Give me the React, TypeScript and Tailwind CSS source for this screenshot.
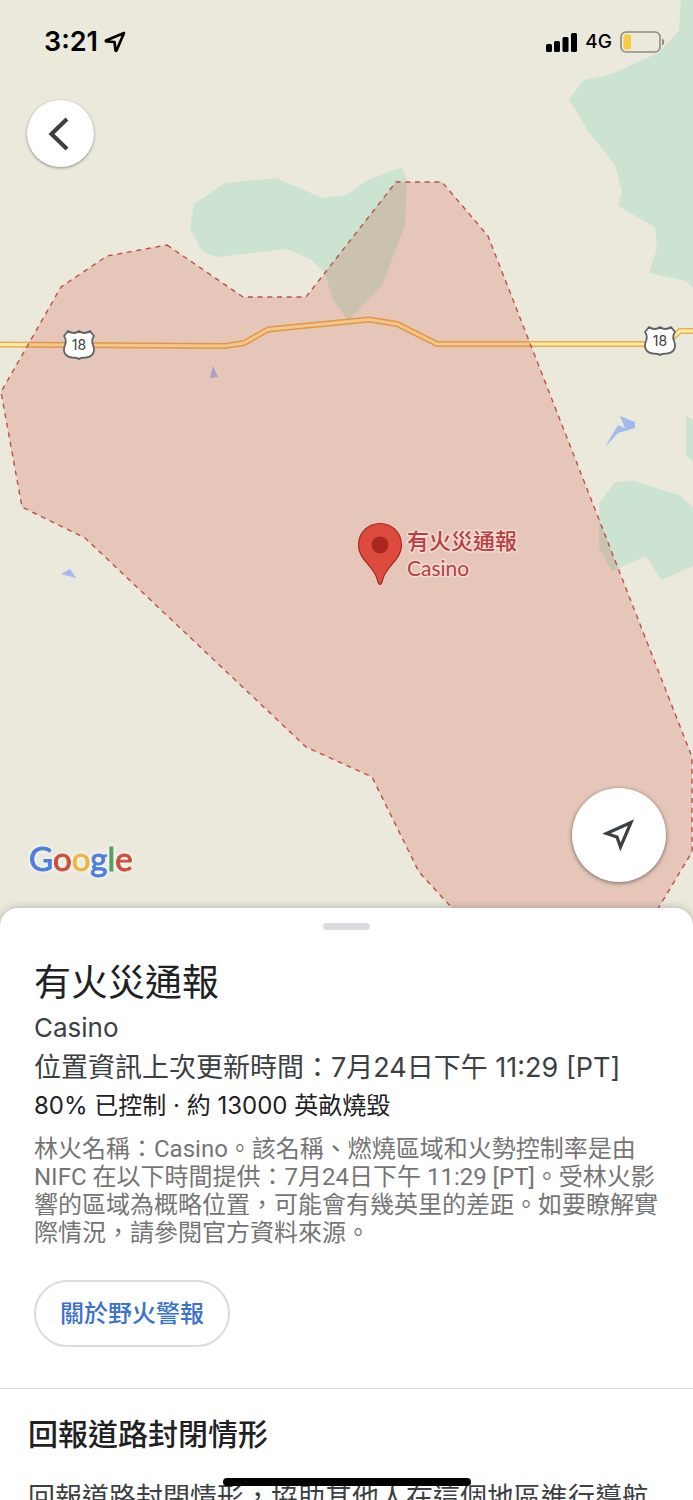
import React from "react";

const parks = [
  "225,183 276,178 322,198 346,195 366,181 402,167 407,180 405,225 382,286 348,321 332,298 325,273 312,260 287,249 216,257 202,251 190,228 194,204",
  "681,0 679,31 658,53 612,74 584,80 569,99 588,131 615,165 622,192 618,206 655,227 657,249 649,273 686,281 693,288 693,0",
  "599,503 615,482 634,481 679,495 693,507 693,566 661,580 646,556 612,571 599,548",
  "686,416 693,420 693,462 686,455",
];

const lakes = [
  "620,416 635,422 635,428 618,433 605,447 618,425 625,428",
  "213,366 218,377 210,378",
  "61,574 70,569 76,578",
];

const fireArea =
  "167,245 243,297 306,297 396,182 442,182 488,236 692,757 692,852 659,907 640,938 480,938 452,908 419,872 372,777 306,747 85,538 22,507 1,392 61,287 107,256";

const road =
  "M0 344.5L225 346L244 343L268 329.5L369 319.5L397 324L437 344H665L680 331H693";

const RouteShield = ({ x, y }: { x: number; y: number }) => (
  <g transform={`translate(${x} ${y})`}>
    <path
      d="M-11 -14Q-5 -10 0 -14Q5 -10 11 -14L15 -9Q12 -5 14 0C17 7 13 12 7 12.500Q2 12.500 0 14Q-2 12.500 -7 12.500C-13 12 -17 7 -14 0Q-12 -5 -15 -9Z"
      fill="#fff"
      stroke="#5f6163"
      strokeWidth="1.8"
      strokeLinejoin="round"
    />
    <text
      y="5"
      textAnchor="middle"
      className="font-['Inter','Liberation_Sans',sans-serif] text-[14px]"
      fill="#3c4043"
    >
      18
    </text>
  </g>
);

const FireMap = () => (
  <svg
    className="block h-full w-full"
    viewBox="0 0 693 930"
    preserveAspectRatio="xMidYMin slice"
    role="img"
    aria-label="Casino"
  >
    {parks.map((points) => (
      <polygon key={points} points={points} fill="#cbe3d0" />
    ))}
    {lakes.map((points) => (
      <polygon key={points} points={points} fill="#a3b9ef" />
    ))}
    <path d={road} fill="none" stroke="#e6b052" strokeWidth="6" />
    <path d={road} fill="none" stroke="#fee9a6" strokeWidth="3" />
    <polygon points={fireArea} fill="#c8200e" fillOpacity="0.17" />
    <polygon
      points={fireArea}
      fill="none"
      stroke="#bf4f48"
      strokeWidth="1.4"
      strokeDasharray="5 4.700"
    />
    <RouteShield x={79} y={345} />
    <RouteShield x={660} y={341} />
    <path
      d="M380 584.500C378 584.500 378 581 376.500 577C372 565 358.500 559 358.500 545C358.500 533 368 523.500 380 523.500S401.500 533 401.500 545C401.500 559 388 565 383.500 577C382 581 382 584.500 380 584.500Z"
      fill="#dc4b3e"
      stroke="#a52a23"
      strokeWidth="1.2"
    />
    <circle cx="380" cy="545" r="8.500" fill="#a82820" />
    <g
      fill="#b83f40"
      stroke="#f3ddd5"
      strokeWidth="3"
      strokeLinejoin="round"
      paintOrder="stroke"
    >
      <text
        x="407"
        y="549"
        className="font-['Noto_Sans_CJK_TC',sans-serif] text-[22px] font-medium"
      >
        有火災通報
      </text>
      <text
        x="407"
        y="576"
        className="font-['Lato','Liberation_Sans',sans-serif] text-[21px]"
      >
        Casino
      </text>
    </g>
  </svg>
);

const StatusBar = () => (
  <div className="flex h-10 items-center justify-between pl-11 pr-7 text-black">
    <div className="flex items-center gap-1.5">
      <span className="text-[27px] font-semibold">3:21</span>
      <svg width="22" height="22" viewBox="0 0 22 22" fill="none">
        <path
          d="M20 2L2 9.500Q1.500 10.500 2.500 10.500L10.500 11L11.500 19.500Q12 20.500 12.500 19.500Z"
          stroke="currentColor"
          strokeWidth="2.700"
          strokeLinejoin="round"
        />
      </svg>
    </div>
    <div className="flex items-center gap-2">
      <svg width="32" height="20" viewBox="0 0 32 20" fill="currentColor">
        <rect x="1" y="12" width="6" height="8" rx="1.500" />
        <rect x="9" y="9" width="6" height="11" rx="1.500" />
        <rect x="17.500" y="5" width="6" height="15" rx="1.500" />
        <rect x="26" y="1" width="6" height="19" rx="1.500" />
      </svg>
      <span className="text-[19px] font-medium">4G</span>
      <svg width="45" height="22" viewBox="0 0 45 22" fill="none">
        <rect
          x="1"
          y="1"
          width="39"
          height="20"
          rx="5"
          stroke="#8e8c80"
          strokeWidth="1.600"
        />
        <rect x="3.500" y="3.500" width="7.500" height="15" rx="2" fill="#f7cb45" />
        <path d="M42 7.500C45 8.500 45 13.500 42 14.500Z" fill="#8e8c80" />
      </svg>
    </div>
  </div>
);

const GoogleLogo = () => (
  <span className="mb-1 font-['Lato','Liberation_Sans',sans-serif] text-[33px] leading-10 drop-shadow-[0_0_2px_#ffffff] [-webkit-text-stroke:1px]">
    <span className="text-[#4f7fdc]">G</span>
    <span className="text-[#c9503f]">o</span>
    <span className="text-[#e8b94a]">o</span>
    <span className="text-[#4f7fdc]">g</span>
    <span className="text-[#55a05c]">l</span>
    <span className="text-[#c9503f]">e</span>
  </span>
);

const App = () => {
  return (
    <main className="relative flex h-screen flex-col overflow-hidden bg-white font-['Inter','Noto_Sans_CJK_TC',sans-serif]">
      <section className="relative h-[62vh] shrink-0 bg-[#ebe9dc]">
        <FireMap />
        <div className="absolute inset-0 flex flex-col justify-between pt-[22px] pb-12">
          <div>
            <StatusBar />
            <button
              type="button"
              aria-label="返回"
              className="mt-[38px] ml-[27px] flex h-[67px] w-[67px] items-center justify-center rounded-full bg-white text-[#3c4043] shadow-[0_1px_3px_rgba(0,0,0,0.4)]"
            >
              <svg width="36" height="36" viewBox="0 0 36 36" fill="none">
                <path d="M24 3L8.500 18L24 33" stroke="currentColor" strokeWidth="4.200" />
              </svg>
            </button>
          </div>
          <div className="flex items-end justify-between pr-[27px] pl-[29px]">
            <GoogleLogo />
            <button
              type="button"
              aria-label="我的位置"
              className="flex h-[94px] w-[94px] items-center justify-center rounded-full bg-white text-[#3c4043] shadow-[0_1px_4px_rgba(0,0,0,0.5)]"
            >
              <svg width="32" height="32" viewBox="0 0 32 32" fill="none">
                <path
                  d="M28 3.500L3.500 14.500L14 18L17.500 28Z"
                  stroke="currentColor"
                  strokeWidth="3.200"
                />
              </svg>
            </button>
          </div>
        </div>
      </section>

      <section className="relative -mt-[22px] min-h-0 flex-1 overflow-hidden rounded-t-[18px] bg-white pt-[15px] shadow-[0_0_8px_rgba(0,0,0,0.25)]">
        <div className="mx-auto h-[7px] w-[47px] rounded-full bg-[#dadce0]" />
        <div className="px-[34px] pt-7">
          <h1 className="text-[37px] leading-[50px] text-[#202124]">
            有火災通報
          </h1>
          <p className="text-[26px] leading-10 text-[#3c4043]">Casino</p>
          <p className="text-[27px] leading-10 text-[#3c4043]">
            位置資訊上次更新時間：7月24日下午 11:29 [PT]
          </p>
          <p className="text-[24px] leading-9 text-[#202124]">
            80% 已控制 · 約 13000 英畝燒毀
          </p>
          <p className="mt-[11px] font-['Roboto','Noto_Sans_CJK_TC',sans-serif] text-[24px] leading-7 text-[#757575]">
            林火名稱：Casino。該名稱、燃燒區域和火勢控制率是由 NIFC
            在以下時間提供：7月24日下午 11:29
            [PT]。受林火影響的區域為概略位置，可能會有幾英里的差距。如要瞭解實際情況，請參閱官方資料來源。
          </p>
          <button
            type="button"
            className="mt-[33px] h-[67px] rounded-full border-2 border-[#dadce0] px-6 text-[24px] font-medium text-[#3b72cb]"
          >
            關於野火警報
          </button>
        </div>
        <div className="mt-[41px] border-t border-[#dadce0] px-7 pt-[25px]">
          <h2 className="text-[30px] leading-10 font-medium text-[#202124]">
            回報道路封閉情形
          </h2>
          <p className="mt-6 text-[27px] leading-10 text-[#3c4043]">
            回報道路封閉情形，協助其他人在這個地區進行導航
          </p>
        </div>
      </section>
      <div className="absolute bottom-3.5 left-1/2 h-2 w-[248px] -translate-x-1/2 rounded-full bg-black" />
    </main>
  );
};

export default App;
